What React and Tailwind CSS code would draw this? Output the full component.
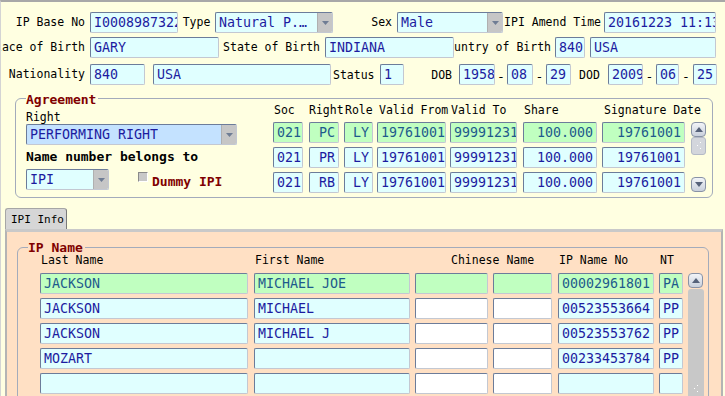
import React from "react";

// sunken edit box, colour by row state
function Field({ w, children, tone = "cyan", align = "left", className = "" }) {
  const toneCls =
    tone === "green"
      ? "bg-[#c0ffc0] text-[#1e5a8c]"
      : tone === "white"
      ? "bg-white text-[#1c1ca0]"
      : tone === "blue"
      ? "bg-[#c4e2ff] text-[#1c1ca0]"
      : "bg-[#e0ffff] text-[#1c1ca0]";
  return (
    <div
      className={`${w} ${toneCls} ${align === "right" ? "justify-end pr-[3px]" : "pl-[3px]"} ${className} h-[21px] shrink-0 flex items-center overflow-hidden whitespace-nowrap rounded-[2px] border border-t-[#6c7c9a] border-l-[#6c7c9a] border-b-[#c3c8d2] border-r-[#c3c8d2] text-[13.3px]`}
    >
      {children}
    </div>
  );
}

function Select({ w, children, tone = "cyan" }) {
  return (
    <Field w={w} tone={tone} className="relative pr-[18px]">
      <span className="truncate">{children}</span>
      <span className="absolute right-0 top-0 bottom-0 w-[15px] bg-[#c6c6c6] border-l border-[#b0b0b0] flex items-center justify-center">
        <svg width="7" height="4" viewBox="0 0 7 4">
          <path d="M0 0H7L3.5 4Z" fill="#6f7d94" />
        </svg>
      </span>
    </Field>
  );
}

function Label({ w, children, className = "justify-end pr-[5px]" }) {
  return (
    <div className={`${w} ${className} h-[21px] shrink-0 flex items-center overflow-hidden whitespace-nowrap`}>
      {children}
    </div>
  );
}

function Dash({ w }) {
  return <div className={`${w} h-[21px] shrink-0 flex items-end justify-center pb-[2px] text-[13px]`}>-</div>;
}

function ScrollButton({ up }) {
  return (
    <div className="w-[15px] h-[15px] rounded-[4px] border border-[#8892a6] bg-gradient-to-b from-[#f2f4f8] to-[#c9d0dc] flex items-center justify-center">
      <svg width="8" height="5" viewBox="0 0 8 5">
        <path d={up ? "M0 5H8L4 0Z" : "M0 0H8L4 5Z"} fill="#56627a" />
      </svg>
    </div>
  );
}

function Grip() {
  return (
    <svg width="6" height="8" viewBox="0 0 6 8">
      <rect x="4" y="0" width="1" height="1" fill="#fff" />
      <rect x="1" y="3" width="1" height="1" fill="#fff" />
      <rect x="4" y="6" width="1" height="1" fill="#fff" />
    </svg>
  );
}

const agreements = [
  { soc: "021", right: "PC", role: "LY", from: "19761001", to: "99991231", share: "100.000", sig: "19761001", tone: "green" },
  { soc: "021", right: "PR", role: "LY", from: "19761001", to: "99991231", share: "100.000", sig: "19761001", tone: "cyan" },
  { soc: "021", right: "RB", role: "LY", from: "19761001", to: "99991231", share: "100.000", sig: "19761001", tone: "cyan" },
];

const names = [
  { last: "JACKSON", first: "MICHAEL JOE", no: "00002961801", nt: "PA", green: true },
  { last: "JACKSON", first: "MICHAEL", no: "00523553664", nt: "PP" },
  { last: "JACKSON", first: "MICHAEL J", no: "00523553762", nt: "PP" },
  { last: "MOZART", first: "", no: "00233453784", nt: "PP" },
  { last: "", first: "", no: "", nt: "" },
  { last: "", first: "", no: "", nt: "" },
];

export default function App() {
  return (
    <div className="w-[725px] h-[396px] overflow-hidden bg-[#ffffe1] border-t-2 border-t-[#a8a8a8] border-l border-l-[#d4d4d4] font-['DejaVu_Sans_Mono',monospace] text-[11.5px] leading-none text-black">
      {/* header fields */}
      <div className="mt-[10px] flex">
        <Label w="w-[89px]">IP Base No</Label>
        <Field w="w-[88px]">I00089873222</Field>
        <Label w="w-[37px]" className="justify-center">Type</Label>
        <Select w="w-[118px]">Natural P...</Select>
        <Label w="w-[64px]">Sex</Label>
        <Select w="w-[106px]">Male</Select>
        <Label w="w-[101px]" className="justify-end pr-[3px]">IPI Amend Time</Label>
        <Field w="w-[112px]">20161223 11:13</Field>
      </div>
      <div className="mt-[4px] flex">
        <Label w="w-[89px]">Place of Birth</Label>
        <Field w="w-[129px]">GARY</Field>
        <Label w="w-[106px]">State of Birth</Label>
        <Field w="w-[129px]">INDIANA</Field>
        <Label w="w-[101px]" className="justify-end pr-[4px]">Country of Birth</Label>
        <Field w="w-[30px]">840</Field>
        <Field w="w-[126px]" className="ml-[5px]">USA</Field>
      </div>
      <div className="mt-[6px] flex">
        <Label w="w-[89px]">Nationality</Label>
        <Field w="w-[55px]">840</Field>
        <Field w="w-[178px]" className="ml-[8px]">USA</Field>
        <Label w="w-[49px]" className="justify-start pl-[2px] pt-[3px]">Status</Label>
        <Field w="w-[24px]">1</Field>
        <Label w="w-[55px]" className="justify-end pr-[7px] pt-[3px]">DOB</Label>
        <Field w="w-[36px]">1958</Field>
        <Dash w="w-[12px]" />
        <Field w="w-[26px]">08</Field>
        <Dash w="w-[13px]" />
        <Field w="w-[25px]">29</Field>
        <Label w="w-[37px]" className="justify-center pt-[3px]">DOD</Label>
        <Field w="w-[35px]">2009</Field>
        <Dash w="w-[13px]" />
        <Field w="w-[23px]">06</Field>
        <Dash w="w-[14px]" />
        <Field w="w-[24px]">25</Field>
      </div>

      {/* Agreement group */}
      <div className="relative mt-[13px] ml-[14px] w-[698px] h-[100px] rounded-[6px] border border-[#a3abbb] flex">
        <span className="absolute left-[10px] top-[-5px] bg-[#ffffe1] pr-[2px] text-[13px] font-bold leading-[12px] text-[#800000]">
          Agreement
        </span>
        <div className="w-[221px] pl-[10px] pt-[12px] flex flex-col">
          <div className="h-[13px] leading-[13px]">Right</div>
          <Select w="w-[211px]" tone="blue">PERFORMING RIGHT</Select>
          <div className="mt-[5px] h-[14px] leading-[14px] text-[13px] font-bold">Name number belongs to</div>
          <div className="mt-[5px] flex">
            <Select w="w-[83px]">IPI</Select>
            <div className="ml-[29px] mt-[3px] w-[10px] h-[10px] bg-[#c8c8c8] border border-t-[#8a8a8a] border-l-[#8a8a8a] border-b-white border-r-white" />
            <div className="ml-[4px] mt-[6px] text-[13px] font-bold text-[#800000]">Dummy IPI</div>
          </div>
        </div>
        <div className="ml-[36px] pt-[5px] flex flex-col">
          <div className="h-[13px] flex items-center whitespace-nowrap">
            <div className="w-[36px] pl-[1px]">Soc</div>
            <div className="w-[35px]">Right</div>
            <div className="w-[33px] pl-[1px]">Role</div>
            <div className="w-[73px] pl-[2px]">Valid From</div>
            <div className="w-[73px] pl-[1px]">Valid To</div>
            <div className="w-[79px] pl-[1px]">Share</div>
            <div className="w-[83px] pl-[2px]">Signature Date</div>
          </div>
          <div className="mt-[5px] flex">
            <div className="flex flex-col gap-[4px]">
              {agreements.map((a, i) => (
                <div key={i} className="flex">
                  <Field w="w-[30px]" tone={a.tone}>{a.soc}</Field>
                  <Field w="w-[30px]" tone={a.tone} align="right" className="ml-[6px]">{a.right}</Field>
                  <Field w="w-[29px]" tone={a.tone} align="right" className="ml-[5px]">{a.role}</Field>
                  <Field w="w-[69px]" tone={a.tone} className="ml-[4px]">{a.from}</Field>
                  <Field w="w-[67px]" tone={a.tone} className="ml-[4px]">{a.to}</Field>
                  <Field w="w-[74px]" tone={a.tone} align="right" className="ml-[6px]">{a.share}</Field>
                  <Field w="w-[83px]" tone={a.tone} align="right" className="ml-[5px]">{a.sig}</Field>
                </div>
              ))}
            </div>
            <div className="ml-[6px] w-[15px] h-[70px] flex flex-col">
              <ScrollButton up />
              <div className="h-[18px] rounded-[3px] bg-[#d3d6dc] border border-[#b4bac6] flex items-center justify-center">
                <Grip />
              </div>
              <div className="flex-1" />
              <ScrollButton />
            </div>
          </div>
        </div>
      </div>

      {/* tab */}
      <div className="mt-[10px] ml-[4px] w-[62px] h-[21px] rounded-t-[3px] border border-b-0 border-[#a6a6a6] border-r-[#7a7a7a] bg-[#d6d6d6] flex items-center pl-[5px] text-[11px] whitespace-nowrap">
        IPI Info
      </div>
      <div className="ml-[4px] w-[718px] h-[200px] bg-[#ffe0c4] border-t-[3px] border-t-[#c9c9c9] border-l-2 border-l-[#b4b4b4] border-r-2 border-r-[#b4b4b4] pt-[15px] pl-[10px]">
        <div className="relative w-[692px] h-[190px] rounded-[6px] border border-[#a3abbb] pl-[22px] pt-[6px]">
          <span className="absolute left-[10px] top-[-6px] bg-[#ffe0c4] pr-[2px] text-[13px] font-bold leading-[12px] text-[#800000]">
            IP Name
          </span>
          <div className="h-[13px] flex items-center whitespace-nowrap">
            <div className="w-[214px] pl-[1px]">Last Name</div>
            <div className="w-[161px] pl-[1px]">First Name</div>
            <div className="w-[143px] pl-[36px]">Chinese Name</div>
            <div className="w-[101px] pl-[1px]">IP Name No</div>
            <div className="w-[29px] pl-[1px]">NT</div>
          </div>
          <div className="mt-[6px] flex">
            <div className="flex flex-col gap-[4px]">
              {names.map((n, i) => {
                const tone = n.green ? "green" : "cyan";
                const cn = n.green ? "green" : "white";
                return (
                  <div key={i} className="flex">
                    <Field w="w-[208px]" tone={tone}>{n.last}</Field>
                    <Field w="w-[156px]" tone={tone} className="ml-[6px]">{n.first}</Field>
                    <Field w="w-[73px]" tone={cn} className="ml-[5px]" />
                    <Field w="w-[59px]" tone={cn} className="ml-[5px]" />
                    <Field w="w-[96px]" tone={tone} className="ml-[6px]">{n.no}</Field>
                    <Field w="w-[24px]" tone={tone} className="ml-[5px] pl-[1px]">{n.nt}</Field>
                  </div>
                );
              })}
            </div>
            <div className="ml-[5px] w-[16px] h-[150px] flex flex-col">
              <ScrollButton up />
              <div className="flex-1 mt-[1px] rounded-[3px] bg-[#c8c8c8] flex items-end justify-center pb-[30px]">
                <Grip />
              </div>
            </div>
          </div>
        </div>
      </div>
    </div>
  );
}
